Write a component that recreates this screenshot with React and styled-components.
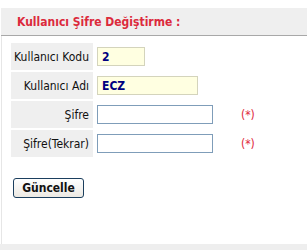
import styled, { createGlobalStyle } from "styled-components";

const GlobalStyle = createGlobalStyle`
    body {
        margin: 0;
        background: #ffffff;
        font-family: Tahoma, "DejaVu Sans Condensed", "DejaVu Sans", sans-serif;
    }
`;

const Page = styled.div`
    width: 307px;
    height: 250px;
    display: flex;
    flex-direction: column;
    padding-top: 8px;
    box-sizing: border-box;
`;

const Panel = styled.div`
    flex: 1;
    border-left: 1px solid #e6e6e6;
    margin-left: 1px;
`;

const Header = styled.div`
    height: 27px;
    background: #efefef;
    border-bottom: 1px solid #a8a8a8;
    display: flex;
    align-items: center;
    padding-left: 16px;
    margin-left: 1px;
    color: #dc2a3c;
    font-weight: bold;
    font-size: 12px;
`;

const Form = styled.table`
    border-spacing: 2px;
    margin: 5px 0 0 7px;
    font-size: 12px;
`;

const Label = styled.td`
    background: #efefef;
    width: 76px;
    height: 27px;
    padding: 0 4px 0 2px;
    text-align: right;
    color: #111;
    white-space: nowrap;
`;

const Field = styled.td`
    padding: 0 0 0 2px;
`;

const Input = styled.input`
    box-sizing: border-box;
    height: 19px;
    width: ${(p) => p.$w}px;
    padding: 0 4px;
    font-family: inherit;
    font-size: 12px;
    font-weight: bold;
    color: #000080;
    background: ${(p) => (p.$readOnly ? "#ffffe1" : "#ffffff")};
    border: 1px solid ${(p) => (p.$readOnly ? "#d4d4bc" : "#7f9db9")};
    outline: none;
    display: block;
`;

const Required = styled.td`
    color: #e0263a;
    font-size: 12px;
    padding-left: 26px;
`;

const Actions = styled.div`
    padding: 18px 0 0 11px;
`;

const Button = styled.button`
    height: 20px;
    width: 71px;
    padding: 0;
    font-family: inherit;
    font-size: 12px;
    font-weight: bold;
    color: #111;
    background: linear-gradient(#ffffff, #ece9e3);
    border: 1px solid #1c3f5e;
    border-radius: 3px;
`;

const Footer = styled.div`
    height: 6px;
    background: #eeeeee;
`;

const rows = [
    { label: "Kullanıcı Kodu", value: "2", w: 48, readOnly: true },
    { label: "Kullanıcı Adı", value: "ECZ", w: 101, readOnly: true },
    { label: "Şifre", value: "", w: 116, type: "password", required: true },
    { label: "Şifre(Tekrar)", value: "", w: 116, type: "password", required: true },
];

const App = () => {
    return (
        <>
            <GlobalStyle />
            <Page>
                <Header>Kullanıcı Şifre Değiştirme :</Header>
                <Panel>
                    <Form>
                        <tbody>
                            {rows.map((row) => (
                                <tr key={row.label}>
                                    <Label>{row.label}</Label>
                                    <Field>
                                        <Input
                                            type={row.type || "text"}
                                            defaultValue={row.value}
                                            readOnly={row.readOnly}
                                            $readOnly={row.readOnly}
                                            $w={row.w}
                                        />
                                    </Field>
                                    <Required>{row.required ? "(*)" : ""}</Required>
                                </tr>
                            ))}
                        </tbody>
                    </Form>
                    <Actions>
                        <Button>Güncelle</Button>
                    </Actions>
                </Panel>
                <Footer />
            </Page>
        </>
    );
};

export default App;
